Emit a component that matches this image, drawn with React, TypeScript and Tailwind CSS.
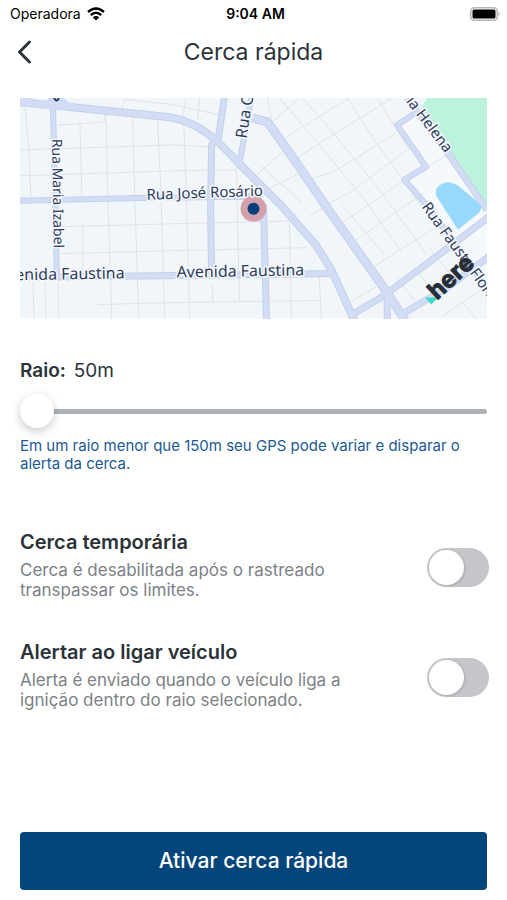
import { useState } from "react";

// Map coordinates share one space: x 20-488, y 98-319.
const STREETS = [
  "M25 108L29 150L31 198",
  "M80 123L82 196",
  "M106 113L108 197L112 319",
  "M133 117L135 197L139 319",
  "M158 120L161 187L165 319",
  "M83 227V275",
  "M33 283L34 319M45 283L46 319M58 283L59 319",
  "M58 125L105 122V113",
  "M20 150L175 145L210 147",
  "M20 176L175 171L237 170",
  "M60 227L175 224L300 221",
  "M60 254L175 251L308 248",
  "M98 305L175 303L320 301",
  "M184 120L187 205L190 319",
  "M213 285V303",
  "M237 162L238 222L240 302",
  "M290 223L292 319",
  "M320 278L322 319",
  "M122 108L125 99L175 105L220 115",
  "M200 98L198 120M186 98L183 118",
  "M268 98L272 118",
  "M250 182L283 152",
  "M263 192L303 172",
  "M260 165L303 203",
  "M273 122L300 98",
  "M285 138L350 98",
  "M295 160L330 137L387 102L392 98",
  "M310 180L338 170L397 133",
  "M327 205L350 193L408 150",
  "M340 225L367 207L405 180",
  "M280 98L330 157L363 197L402 252",
  "M303 98L330 128L380 190L428 255",
  "M348 98L375 140L420 203L440 228",
  "M378 98L410 150",
  "M343 205L385 255",
  "M350 245L403 208L425 193",
  "M367 272L437 227",
  "M398 278L425 314",
  "M415 267L432 290",
  "M427 168L448 155",
  "M430 248L450 273",
  "M352 302L377 287",
  "M463 302L477 319",
  "M443 317L490 285",
  "M310 217L328 205",
];

const ROADS = [
  { d: "M20 201L150 198L262 197", width: 5 },
  { d: "M20 278L335 274", width: 6 },
  { d: "M53 104L57 280", width: 5 },
  { d: "M225 96L219 137L212 145L211 210L212 276", width: 6 },
  { d: "M252 96L240 163", width: 5 },
  { d: "M264 205L267 321", width: 6 },
  { d: "M253 118L268 122L295 160L327 207L388 293L406 321", width: 8 },
  { d: "M353 315L385 296L440 255L490 217", width: 6 },
  { d: "M388 293V321", width: 6 },
  { d: "M404 314L445 290L490 257", width: 6 },
  { d: "M418 112L398 125L427 167L405 180L430 208L490 292", width: 5 },
  { d: "M403 92L450 155L488 210", width: 6 },
  { d: "M18 102L60 106L168 117C190 120 206 131 217 141C228 151 234 158 241 165L283 207L317 246L332 270L355 321", width: 7 },
];

const LABELS = [
  { text: "Rua José Rosário", size: 15, transform: "translate(147 200) rotate(-2)" },
  { text: "Avenida Faustina", size: 16, transform: "translate(177 278) rotate(-1)" },
  { text: "Avenida Faustina", size: 16, transform: "translate(-3 281) rotate(-1)" },
  { text: "Rua Maria Izabel", size: 14, transform: "translate(52 139) rotate(89)" },
  { text: "Rua Costa", size: 16, transform: "translate(247 139) rotate(-81)" },
  { text: "Rua Maria Helena", size: 15, transform: "translate(371 54) rotate(53)" },
  { text: "Rua Fausto Floriano", size: 15, transform: "translate(422 207) rotate(54)" },
];

const ALERT_OPTIONS = [
  {
    id: "temporary",
    title: "Cerca temporária",
    description: "Cerca é desabilitada após o rastreado transpassar os limites.",
  },
  {
    id: "ignition",
    title: "Alertar ao ligar veículo",
    description: "Alerta é enviado quando o veículo liga a ignição dentro do raio selecionado.",
  },
];

export default function App() {
  const [radius, setRadius] = useState(50);

  return (
    <div className="flex min-h-screen flex-col bg-white font-['Inter',sans-serif] text-[#2b3238]">
      <StatusBar />

      <header className="grid h-12 grid-cols-[1fr_auto_1fr] items-center px-4">
        <button type="button" aria-label="Voltar" className="flex w-8">
          <BackIcon />
        </button>
        <h1 className="text-[23px]">Cerca rápida</h1>
      </header>

      <main className="flex flex-1 flex-col px-5 pt-[22px] pb-2.5">
        <FenceMap />

        <div className="mt-10 flex gap-2 text-[19px] leading-6">
          <label htmlFor="radius" className="font-semibold">
            Raio:
          </label>
          <output htmlFor="radius">{radius}m</output>
        </div>
        <input
          id="radius"
          type="range"
          min={50}
          max={1000}
          step={10}
          value={radius}
          onChange={(event) => setRadius(Number(event.target.value))}
          className="mt-3 h-[34px] w-full appearance-none bg-transparent [&::-webkit-slider-runnable-track]:h-[5px] [&::-webkit-slider-runnable-track]:rounded-full [&::-webkit-slider-runnable-track]:bg-[#aeb1b3] [&::-webkit-slider-thumb]:-mt-[15px] [&::-webkit-slider-thumb]:size-[34px] [&::-webkit-slider-thumb]:appearance-none [&::-webkit-slider-thumb]:rounded-full [&::-webkit-slider-thumb]:bg-white [&::-webkit-slider-thumb]:shadow-[0_3px_10px_rgba(0,0,0,0.22)]"
        />
        <p className="mt-2 text-[15px] leading-[18px] text-[#1c5a93]">
          Em um raio menor que 150m seu GPS pode variar e disparar o alerta da cerca.
        </p>

        <div className="-mr-0.5 mt-[55px] flex flex-col gap-[38px]">
          {ALERT_OPTIONS.map((option) => (
            <AlertOption key={option.id} {...option} />
          ))}
        </div>

        <button
          type="button"
          className="mt-auto h-[58px] w-full rounded-[4px] bg-[#04467c] text-[21px] font-medium text-white"
        >
          Ativar cerca rápida
        </button>
      </main>
    </div>
  );
}

function StatusBar() {
  return (
    <div className="grid h-7 grid-cols-3 items-center pr-1.5 pl-2.5 text-sm text-black">
      <span className="flex items-center gap-1.5">
        Operadora
        <WifiIcon />
      </span>
      <span className="text-center font-semibold">9:04 AM</span>
      <span className="flex justify-end">
        <BatteryIcon />
      </span>
    </div>
  );
}

function AlertOption({ id, title, description }: { id: string; title: string; description: string }) {
  return (
    <div className="flex items-center justify-between">
      <div className="w-[340px]">
        <label htmlFor={id} className="block text-xl leading-7 font-semibold">
          {title}
        </label>
        <p id={`${id}-description`} className="mt-1 text-[17px] leading-5 text-[#7c8185]">
          {description}
        </p>
      </div>
      <input
        id={id}
        type="checkbox"
        role="switch"
        aria-describedby={`${id}-description`}
        className="mt-2 h-[39px] w-[62px] shrink-0 appearance-none rounded-full bg-[#c4c6c9] p-0.5 before:block before:size-[35px] before:rounded-full before:bg-white before:shadow-[1px_1px_3px_rgba(0,0,0,0.15)] checked:bg-[#04467c] checked:before:ml-[23px]"
      />
    </div>
  );
}

function FenceMap() {
  return (
    <svg viewBox="20 98 468 221" role="img" aria-label="Mapa da cerca" className="w-full">
      <rect x="20" y="98" width="468" height="221" fill="#f1f6fb" />
      <path d="M400 125L418 112L452 157L488 208V290L430 208L405 180L427 167Z" fill="#f6f9fc" />
      <path d="M428 98H488V208L452 157L420 112Z" fill="#bdf2dc" />
      <path d="M437 196Q435 188 443 184Q451 180 459 186L481 204Q484 208 480 213L459 230Z" fill="#98d8fd" />

      <g fill="none" stroke="#dde3e6" strokeWidth="1">
        {STREETS.map((d) => (
          <path key={d} d={d} />
        ))}
      </g>
      <g fill="none" stroke="#c3d0e8" strokeLinejoin="round">
        {ROADS.map((road) => (
          <path key={road.d} d={road.d} strokeWidth={road.width + 1} />
        ))}
      </g>
      <path d="M43 106L49 98H63L73 105L62 110H50ZM20 98H34L28 101H20Z" fill="#cfdbf5" />
      <g fill="none" stroke="#d2dcf5" strokeLinejoin="round">
        {ROADS.map((road) => (
          <path key={road.d} d={road.d} strokeWidth={road.width - 1} />
        ))}
      </g>
      <path d="M54 98Q57 103 59 98" fill="none" stroke="#2f3d5c" strokeWidth="2" />

      <circle cx="254" cy="209" r="13" fill="#d3a0ac" />
      <circle cx="254" cy="209" r="6" fill="#04407c" />

      <g
        fill="#2d3b5a"
        stroke="#f6f9fd"
        strokeWidth="3"
        strokeLinejoin="round"
        className="font-['Noto_Sans',sans-serif] [paint-order:stroke]"
      >
        {LABELS.map((label) => (
          <text key={label.transform} transform={label.transform} fontSize={label.size}>
            {label.text}
          </text>
        ))}
      </g>

      <path d="M426 298H439L432 305Z" fill="#3ed8cb" />
      <text
        transform="translate(438 301) rotate(-43)"
        fill="#272d37"
        stroke="#272d37"
        strokeWidth="1"
        className="font-['Inter',sans-serif] text-[24px] font-bold"
      >
        here
      </text>
    </svg>
  );
}

function BackIcon() {
  return (
    <svg width="16" height="26" viewBox="0 0 16 26" fill="none" aria-hidden="true">
      <path d="M13.5 3L3.5 13L13.5 23" stroke="#2b3238" strokeWidth="3" strokeLinecap="round" strokeLinejoin="round" />
    </svg>
  );
}

function WifiIcon() {
  return (
    <svg width="18" height="14" viewBox="0 0 18 14" fill="none" stroke="#000" aria-hidden="true">
      <path d="M1 5Q9-2 17 5" strokeWidth="2.4" />
      <path d="M3.8 8Q9 3.6 14.2 8" strokeWidth="2.3" />
      <path d="M9 13.5L5.8 10.3Q9 7.8 12.2 10.3Z" fill="#000" stroke="none" />
    </svg>
  );
}

function BatteryIcon() {
  return (
    <svg width="31" height="14" viewBox="0 0 31 14" aria-hidden="true">
      <rect x="0.75" y="0.75" width="26.5" height="12.5" rx="3.5" fill="#fff" stroke="#b5b5b5" strokeWidth="1.5" />
      <rect x="2.5" y="2.5" width="23" height="9" rx="1.5" fill="#000" />
      <path d="M28.5 4.5Q31 7 28.5 9.5Z" fill="#b5b5b5" />
    </svg>
  );
}
